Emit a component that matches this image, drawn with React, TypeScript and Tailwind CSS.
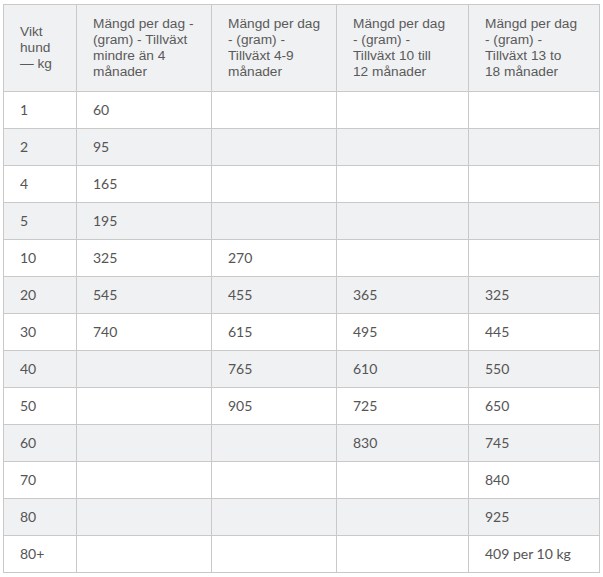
import React from 'react';

const headers = [
  ['Vikt', 'hund', '— kg'],
  ['Mängd per dag -', '(gram) - Tillväxt', 'mindre än 4', 'månader'],
  ['Mängd per dag', '- (gram) -', 'Tillväxt 4-9', 'månader'],
  ['Mängd per dag', '- (gram) -', 'Tillväxt 10 till', '12 månader'],
  ['Mängd per dag', '- (gram) -', 'Tillväxt 13 to', '18 månader'],
];

const rows = [
  ['1', '60', '', '', ''],
  ['2', '95', '', '', ''],
  ['4', '165', '', '', ''],
  ['5', '195', '', '', ''],
  ['10', '325', '270', '', ''],
  ['20', '545', '455', '365', '325'],
  ['30', '740', '615', '495', '445'],
  ['40', '', '765', '610', '550'],
  ['50', '', '905', '725', '650'],
  ['60', '', '', '830', '745'],
  ['70', '', '', '', '840'],
  ['80', '', '', '', '925'],
  ['80+', '', '', '', '409 per 10 kg'],
];

const widths = ['w-[73px]', 'w-[135px]', 'w-[125px]', 'w-[132px]', 'w-[131px]'];

export default function App() {
  return (
    <div className="bg-white w-[603px] h-[577px] pt-[4px] pl-[3px]">
      <table className="table-fixed border-collapse w-[597px] text-[#555]">
        <colgroup>
          {widths.map((w, i) => (
            <col key={i} className={w} />
          ))}
        </colgroup>
        <thead>
          <tr className="bg-[#f0f1f3]">
            {headers.map((lines, i) => (
              <th
                key={i}
                className="h-[87px] border border-[#c9c9c9] px-4 text-left align-middle font-normal whitespace-nowrap text-[13.7px] leading-[16px] text-[#5a5a5a]"
                style={{ fontFamily: '"Liberation Sans", Arial, sans-serif' }}
              >
                {lines.map((l, j) => (
                  <React.Fragment key={j}>
                    {l}
                    {j < lines.length - 1 && <br />}
                  </React.Fragment>
                ))}
              </th>
            ))}
          </tr>
        </thead>
        <tbody style={{ fontFamily: 'Lato, "Open Sans", sans-serif' }}>
          {rows.map((r, i) => (
            <tr key={i} className={i % 2 === 1 ? 'bg-[#f0f1f3]' : 'bg-white'}>
              {r.map((c, j) => (
                <td
                  key={j}
                  className="h-[37px] border border-[#c9c9c9] px-4 py-0 align-middle text-[14px] leading-[16px]"
                >
                  {c}
                </td>
              ))}
            </tr>
          ))}
        </tbody>
      </table>
    </div>
  );
}
